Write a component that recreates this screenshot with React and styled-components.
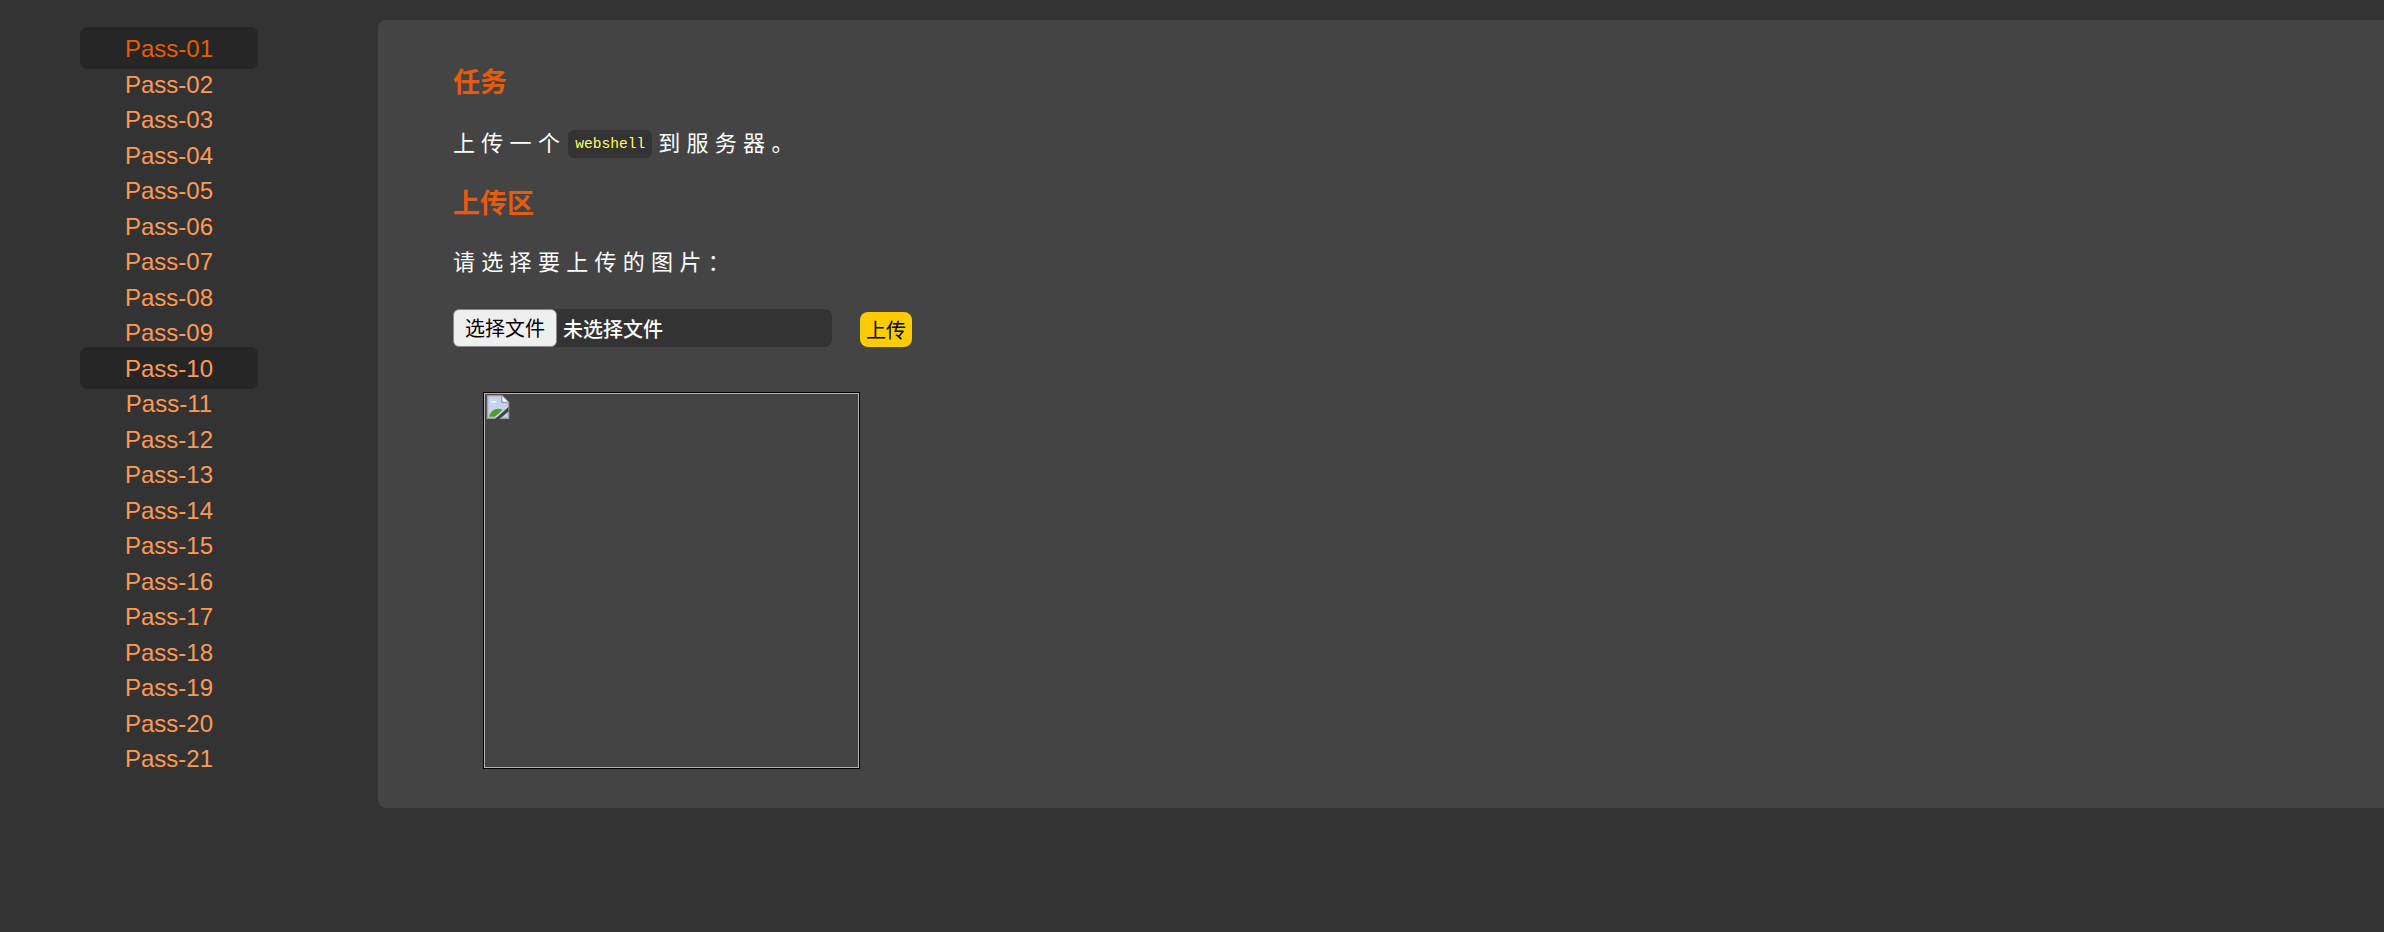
import React from 'react'
import styled, { createGlobalStyle } from 'styled-components'

const GlobalStyle = createGlobalStyle`
  html, body {
    margin: 0;
    padding: 0;
    background: #333;
  }
  body {
    font-family: "Liberation Sans", "Noto Sans CJK SC", sans-serif;
    color: #fff;
    overflow: hidden;
  }
`

const Page = styled.div`
  display: flex;
  align-items: flex-start;
  width: 2384px;
  height: 932px;
  padding-top: 20px;
  box-sizing: border-box;
`

const Sidebar = styled.nav`
  display: flex;
  flex-direction: column;
  align-items: center;
  width: 338px;
  flex: none;
  padding-top: 7px;
`

const PassLink = styled.a`
  display: block;
  width: 178px;
  height: 42px;
  margin-bottom: -6.5px;
  line-height: 44px;
  text-align: center;
  font-size: 24px;
  text-decoration: none;
  color: ${props => props.$current ? '#e65c00' : '#ff9a56'};
  background: ${props => props.$highlight ? '#262626' : 'transparent'};
  border-radius: 8px;
`

const Panel = styled.main`
  flex: 1;
  box-sizing: border-box;
  height: 788px;
  margin-left: 40px;
  padding: 43px 75px 0;
  background: #444;
  border-radius: 8px 0 0 8px;
`

const Heading = styled.h2`
  margin: 0;
  font-size: 27px;
  line-height: 40px;
  font-weight: 700;
  color: #e65c0e;
`

const Text = styled.p`
  margin: ${props => props.$first ? '21px 0 20px' : '19px 0 20px'};
  font-size: 22px;
  line-height: 40px;
  letter-spacing: 6.3px;
  color: #fff;
`

const Code = styled.code`
  display: inline-block;
  width: 84px;
  height: 28px;
  margin: 0 6px 0 2px;
  line-height: 28px;
  text-align: center;
  vertical-align: 3px;
  font-family: "Liberation Mono", monospace;
  font-size: 14.6px;
  letter-spacing: 0;
  color: #ffff66;
  background: #333;
  border-radius: 6px;
`

const UploadRow = styled.div`
  display: flex;
  align-items: center;
  margin-top: 26px;
`

const FileField = styled.div`
  display: flex;
  align-items: center;
  width: 379px;
  height: 38px;
  background: #333;
  border-radius: 8px;
`

const FileButton = styled.span`
  display: block;
  box-sizing: border-box;
  width: 104px;
  height: 38px;
  line-height: 38px;
  text-align: center;
  font-size: 20px;
  color: #000;
  background: #efefef;
  border: 1px solid #8a8a8a;
  border-radius: 6px;
`

const FileName = styled.span`
  margin-left: 6px;
  font-size: 20px;
  font-weight: 500;
  color: #fff;
`

const SubmitButton = styled.button`
  box-sizing: border-box;
  width: 52px;
  height: 35px;
  margin: 3px 0 0 28px;
  padding: 0;
  border: 0;
  border-radius: 8px;
  font-family: inherit;
  font-size: 20px;
  color: #000;
  background: #ffcc00;
`

const Preview = styled.div`
  box-sizing: border-box;
  width: 377px;
  height: 377px;
  margin: 45px 0 0 30px;
  border: 1px solid #000;
`

const PreviewInner = styled.div`
  box-sizing: border-box;
  height: 100%;
  padding: 1px;
  border: 1px solid #b4b4b4;
`

const BrokenImage = () => (
  <svg width="24" height="24" viewBox="0 0 16 16" style={{ display: 'block' }}>
    <path d="M1 0.5h9.5L15 5v10.5H1z" fill="#c4d4ee" stroke="#a0a0a0" />
    <path d="M10.5 0.5V5H15" fill="#fff" stroke="#a0a0a0" />
    <path d="M3 5a2 1 0 0 1 4 0z" fill="#fff" />
    <path d="M2 14.5 C3 10 8 8 11 10 L6 14.5z" fill="#4f9e2d" />
    <path d="M15 8 L6 16 H9 L15 11z" fill="#444" />
  </svg>
)

const passes = Array.from({ length: 21 }, (_, i) => `Pass-${String(i + 1).padStart(2, '0')}`)

const App = () => (
  <Page>
    <GlobalStyle />
    <Sidebar>
      {passes.map((name, i) => (
        <PassLink key={name} href="#" $current={i === 0} $highlight={i === 0 || i === 9}>{name}</PassLink>
      ))}
    </Sidebar>
    <Panel>
      <Heading>任务</Heading>
      <Text $first>上传一个<Code>webshell</Code>到服务器。</Text>
      <Heading>上传区</Heading>
      <Text>请选择要上传的图片：</Text>
      <UploadRow>
        <FileField>
          <FileButton>选择文件</FileButton>
          <FileName>未选择文件</FileName>
        </FileField>
        <SubmitButton type="button">上传</SubmitButton>
      </UploadRow>
      <Preview>
        <PreviewInner>
          <BrokenImage />
        </PreviewInner>
      </Preview>
    </Panel>
  </Page>
)

export default App
